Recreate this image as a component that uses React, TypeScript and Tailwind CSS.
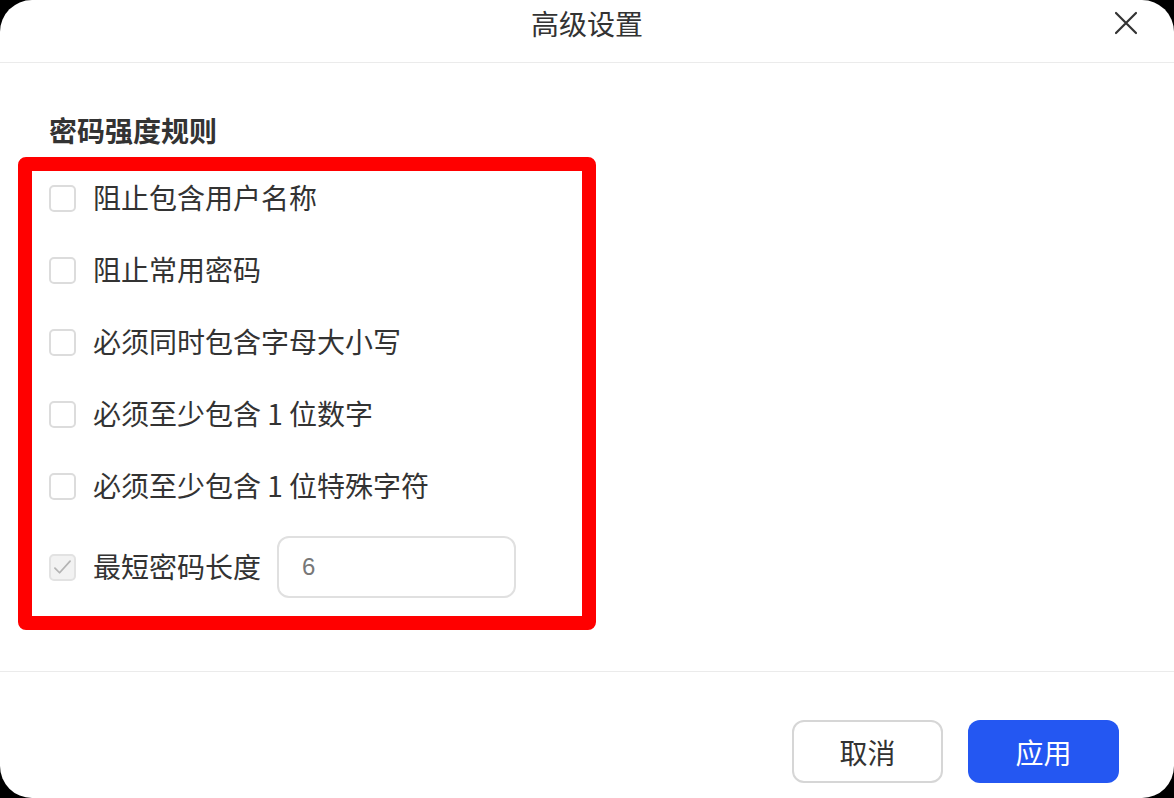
const rules = [
  "阻止包含用户名称",
  "阻止常用密码",
  "必须同时包含字母大小写",
  "必须至少包含 1 位数字",
  "必须至少包含 1 位特殊字符",
];

const font = { fontFamily: '"Noto Sans CJK SC", "Noto Sans", sans-serif' };

const App = () => {
  return (
    <div className="w-[1174px] h-[798px] bg-black" style={font}>
      <div className="h-full bg-white rounded-[32px] flex flex-col overflow-hidden">
        {/* header */}
        <div className="relative h-[63px] shrink-0 border-b border-[#ebebeb] flex items-start justify-center pt-[8px]">
          <span className="text-[28px] leading-[30px] text-[#333]">高级设置</span>
          <button className="absolute left-[1113px] top-[10px] w-[26px] h-[26px] flex items-center justify-center">
            <svg width="24" height="24" viewBox="0 0 24 24" fill="none" stroke="#333" strokeWidth="2.2" strokeLinecap="round">
              <path d="M2 2L22 22M22 2L2 22" />
            </svg>
          </button>
        </div>

        {/* body */}
        <div className="flex-1 pl-[18px] pt-[47px]">
          <h2 className="pl-[31px] h-[40px] flex items-center text-[28px] leading-none font-bold text-[#333]">
            密码强度规则
          </h2>
          <div className="mt-[7px] w-[578px] h-[473px] border-[14px] border-[#ff0000] rounded-[8px] flex flex-col gap-[18px] pl-[17px]">
            {rules.map((r) => (
              <label key={r} className="h-[54px] flex items-center gap-[17px]">
                <span className="w-[27px] h-[27px] rounded-[5px] border-2 border-[#dcdcdc] bg-white" />
                <span className="text-[28px] leading-none text-[#333] pb-[3px]">{r}</span>
              </label>
            ))}
            <div className="mt-[5px] h-[62px] flex items-center">
              <span className="w-[27px] h-[27px] rounded-[5px] border-2 border-[#e2e2e2] bg-[#f2f2f2] flex items-center justify-center">
                <svg width="21" height="21" viewBox="0 0 18 18" fill="none" stroke="#b4b4b4" strokeWidth="1.5" strokeLinecap="round" strokeLinejoin="round">
                  <path d="M2.5 9.5L6.5 13.5L15.5 3.5" />
                </svg>
              </span>
              <span className="ml-[17px] text-[28px] leading-none text-[#333] pb-[3px]">最短密码长度</span>
              <div className="ml-[16px] w-[239px] h-[62px] rounded-[12px] border-2 border-[#e0e0e0] flex items-center pl-[23px]">
                <span className="text-[24px] leading-none text-[#777]" style={{ fontFamily: '"Liberation Sans", sans-serif' }}>6</span>
              </div>
            </div>
          </div>
        </div>

        {/* footer */}
        <div className="h-[127px] shrink-0 border-t border-[#ebebeb] flex items-start justify-end gap-[25px] pt-[48px] pr-[55px]">
          <button className="w-[151px] h-[63px] rounded-[12px] border-2 border-[#d6d6d6] bg-white text-[28px] leading-none text-[#333]">
            取消
          </button>
          <button className="w-[151px] h-[63px] rounded-[12px] bg-[#2457f2] text-[28px] leading-none text-white">
            应用
          </button>
        </div>
      </div>
    </div>
  );
};

export default App;
